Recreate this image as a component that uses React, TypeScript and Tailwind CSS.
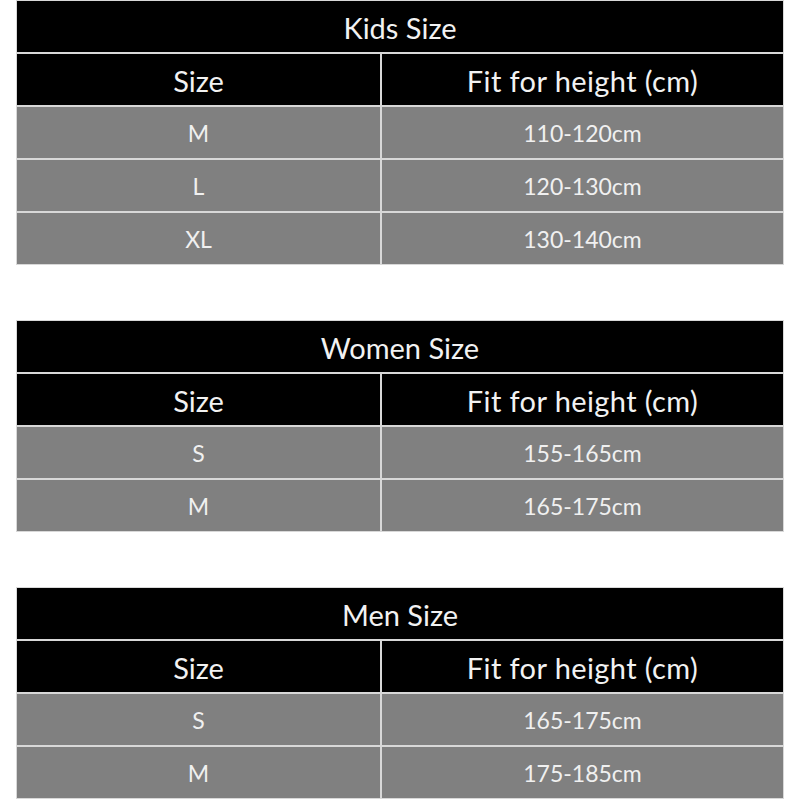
import React from "react";

type Table = { title: string; rows: [string, string][] };

const tables: Table[] = [
  { title: "Kids Size", rows: [["M", "110-120cm"], ["L", "120-130cm"], ["XL", "130-140cm"]] },
  { title: "Women Size", rows: [["S", "155-165cm"], ["M", "165-175cm"]] },
  { title: "Men Size", rows: [["S", "165-175cm"], ["M", "175-185cm"]] },
];

function SizeTable({ t }: { t: Table }) {
  return (
    <div className="w-[768px] flex flex-col gap-[2px] bg-[#d8d8d8] border border-[#d8d8d8]">
      <div className="h-[51px] bg-black flex items-center justify-center pt-[3px] text-[29px] text-[#f2f2f2]">{t.title}</div>
      <div className="h-[51px] grid grid-cols-[363px_1fr] gap-[2px]">
        <div className="bg-black flex items-center justify-center pt-[3px] text-[29px] text-[#f2f2f2]">Size</div>
        <div className="bg-black flex items-center justify-center pt-[3px] text-[29px] tracking-[0.4px] text-[#f2f2f2]">Fit for height (cm)</div>
      </div>
      {t.rows.map(([s, h], i) => (
        <div key={i} className="h-[51px] grid grid-cols-[363px_1fr] gap-[2px]">
          <div className="bg-[#808080] flex items-center justify-center pt-[2px] text-[23px] text-[#f0f0f0]">{s}</div>
          <div className="bg-[#808080] flex items-center justify-center pt-[2px] text-[23px] text-[#f0f0f0]">{h}</div>
        </div>
      ))}
    </div>
  );
}

export default function App() {
  return (
    <div className="w-[800px] h-[800px] bg-white pl-[16px] flex flex-col gap-[55px] overflow-hidden" style={{ fontFamily: "Lato, 'Open Sans', sans-serif" }}>
      {tables.map((t, i) => (
        <SizeTable key={i} t={t} />
      ))}
    </div>
  );
}
